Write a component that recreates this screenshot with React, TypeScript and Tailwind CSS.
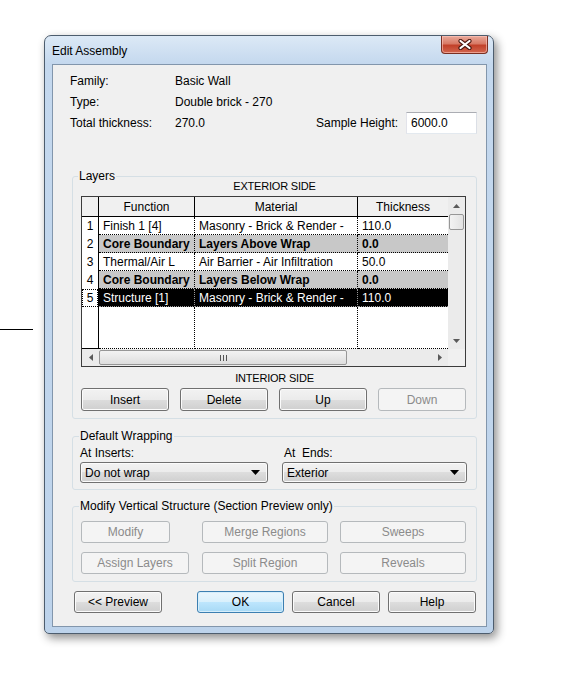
import React from "react";

type Layer = {
  n: number;
  fn: string;
  mat: string;
  th: string;
  kind: "normal" | "core" | "selected";
};

const layers: Layer[] = [
  { n: 1, fn: "Finish 1 [4]", mat: "Masonry - Brick & Render -", th: "110.0", kind: "normal" },
  { n: 2, fn: "Core Boundary", mat: "Layers Above Wrap", th: "0.0", kind: "core" },
  { n: 3, fn: "Thermal/Air L", mat: "Air Barrier - Air Infiltration", th: "50.0", kind: "normal" },
  { n: 4, fn: "Core Boundary", mat: "Layers Below Wrap", th: "0.0", kind: "core" },
  { n: 5, fn: "Structure [1]", mat: "Masonry - Brick & Render -", th: "110.0", kind: "selected" },
];

function WinButton({
  label,
  className,
  disabled,
  primary,
}: {
  label: string;
  className: string;
  disabled?: boolean;
  primary?: boolean;
}) {
  const look = disabled
    ? "border-[#b5b9bc] bg-[#f4f4f4] text-[#8b8b8b]"
    : primary
      ? "border-[#3c7fb1] bg-[linear-gradient(#eaf6fd_0%,#d9f0fc_50%,#bee6fd_50%,#a7d9f5_100%)] text-black shadow-[inset_0_0_0_1px_#d6eefb]"
      : "border-[#707070] bg-[linear-gradient(#f2f2f2_0%,#ebebeb_50%,#dddddd_50%,#cfcfcf_100%)] text-black shadow-[inset_0_0_0_1px_#fbfbfb]";
  return (
    <button
      type="button"
      className={`flex items-center justify-center rounded-[3px] border leading-none ${look} ${className}`}
    >
      {label}
    </button>
  );
}

function Arrow({ dir }: { dir: "up" | "down" | "left" | "right" }) {
  const d =
    dir === "up"
      ? "M0 4 L3.5 0 L7 4 Z"
      : dir === "down"
        ? "M0 0 L7 0 L3.5 4 Z"
        : dir === "left"
          ? "M4 0 L4 7 L0 3.5 Z"
          : "M0 0 L4 3.5 L0 7 Z";
  const w = dir === "up" || dir === "down" ? 7 : 4;
  const h = dir === "up" || dir === "down" ? 4 : 7;
  return (
    <svg width={w} height={h} viewBox={`0 0 ${w} ${h}`}>
      <path d={d} fill="#5a5a5a" />
    </svg>
  );
}

function Select({ value, className }: { value: string; className: string }) {
  return (
    <div
      className={`flex h-[21px] items-center justify-between rounded-[3px] border border-[#707070] bg-[linear-gradient(#f2f2f2_0%,#ebebeb_50%,#dddddd_50%,#cfcfcf_100%)] pl-[4px] pr-[7px] shadow-[inset_0_0_0_1px_#fbfbfb] ${className}`}
    >
      <span>{value}</span>
      <svg width="9" height="5" viewBox="0 0 9 5">
        <path d="M0 0 L9 0 L4.5 5 Z" fill="#000" />
      </svg>
    </div>
  );
}

function LayerRow({ layer }: { layer: Layer }) {
  const rowLook =
    layer.kind === "selected"
      ? "bg-black text-white border-[#9a9a9a]"
      : layer.kind === "core"
        ? "bg-[#c8c8c8] font-bold border-black"
        : "bg-white border-black";
  const cell = `flex items-center overflow-hidden whitespace-nowrap pl-[4px] border-b border-dotted ${rowLook}`;
  return (
    <div className="flex h-[18px]">
      <div className="flex w-[17px] border-r border-black bg-white">
        {layer.kind === "selected" ? (
          <div className="flex flex-1 items-center justify-center border border-dotted border-black">
            {layer.n}
          </div>
        ) : (
          <div className="flex flex-1 items-center justify-center">{layer.n}</div>
        )}
      </div>
      <div className={`w-[96px] border-r ${cell}`}>{layer.fn}</div>
      <div className={`w-[163px] border-r ${cell}`}>{layer.mat}</div>
      <div className={`w-[90px] ${cell}`}>{layer.th}</div>
    </div>
  );
}

function LayersTable() {
  return (
    <div className="ml-[8px] mt-[4px] flex h-[171px] w-[385px] flex-col border border-[#3c3c3c] bg-white">
      <div className="flex h-[152px]">
        <div className="flex w-[366px] flex-col">
          <div className="flex h-[20px] border-b border-black bg-[#f0f0f0]">
            <div className="w-[17px] border-r border-black" />
            <div className="flex w-[96px] items-center justify-center border-r border-black">Function</div>
            <div className="flex w-[163px] items-center justify-center border-r border-black">Material</div>
            <div className="flex w-[90px] items-center justify-center">Thickness</div>
          </div>
          {layers.map((layer) => (
            <LayerRow key={layer.n} layer={layer} />
          ))}
          <div className="flex flex-1">
            <div className="w-[17px] border-r border-b border-black" />
            <div className="w-[96px] border-r border-b border-dotted border-black" />
            <div className="w-[163px] border-r border-b border-dotted border-black" />
            <div className="w-[90px] border-b border-dotted border-black" />
          </div>
        </div>
        <div className="flex w-[17px] flex-col bg-[#ebebeb]">
          <div className="flex h-[17px] items-center justify-center">
            <Arrow dir="up" />
          </div>
          <div className="mx-[1px] h-[16px] rounded-[2px] border border-[#979797] bg-[linear-gradient(90deg,#f3f3f3,#e2e2e2)]" />
          <div className="flex-1" />
          <div className="flex h-[17px] items-center justify-center">
            <Arrow dir="down" />
          </div>
        </div>
      </div>
      <div className="flex h-[17px]">
        <div className="flex w-[366px] items-center bg-[#ebebeb]">
          <div className="flex h-full w-[17px] items-center justify-center">
            <Arrow dir="left" />
          </div>
          <div className="flex h-[15px] w-[248px] items-center justify-center gap-[2px] rounded-[2px] border border-[#979797] bg-[linear-gradient(#f3f3f3,#dedede)]">
            <div className="h-[6px] w-px bg-[#555]" />
            <div className="h-[6px] w-px bg-[#555]" />
            <div className="h-[6px] w-px bg-[#555]" />
          </div>
          <div className="flex-1" />
          <div className="flex h-full w-[17px] items-center justify-center">
            <Arrow dir="right" />
          </div>
        </div>
        <div className="w-[17px] bg-[#f0f0f0]" />
      </div>
    </div>
  );
}

export default function App() {
  return (
    <div className="relative h-[685px] w-[563px] overflow-hidden bg-white pl-[44px] pt-[35px] font-['Liberation_Sans',Arial,sans-serif] text-[12px] text-black">
      <div className="absolute left-0 top-[329px] h-px w-[33px] bg-black" />

      <div className="flex h-[599px] w-[450px] flex-col rounded-t-[7px] rounded-b-[5px] border border-[#4d5d6e] bg-[linear-gradient(#dce9f6_0px,#c4d8ee_28px,#bdd3eb_100%)] pl-[7px] shadow-[3px_4px_10px_rgba(0,0,0,0.45)]">
        <div className="flex h-[28px] items-start justify-between">
          <div className="self-center pt-[1px]">Edit Assembly</div>
          <div className="mr-[5px] flex h-[18px] w-[47px] items-center justify-center rounded-b-[4px] border border-t-0 border-[#7a2f22] bg-[linear-gradient(#e9a99a_0%,#d87a66_45%,#c2412a_55%,#d2664f_100%)] shadow-[inset_0_0_0_1px_rgba(255,200,190,0.6)]">
            <svg width="14" height="11" viewBox="0 0 14 11">
              <path d="M2.5 2 L11.5 9 M11.5 2 L2.5 9" stroke="#4a1810" strokeWidth="4.2" strokeLinecap="round" />
              <path d="M2.5 2 L11.5 9 M11.5 2 L2.5 9" stroke="#ffffff" strokeWidth="2.2" strokeLinecap="round" />
            </svg>
          </div>
        </div>

        <div className="flex h-[563px] w-[435px] flex-col border border-[#8296ac] bg-[#f0f0f0]">
          <div className="flex flex-col pl-[17px] pr-[8px] pt-[5px]">
            <div className="flex h-[21px] items-center">
              <div className="w-[105px]">Family:</div>
              <div>Basic Wall</div>
            </div>
            <div className="flex h-[21px] items-center">
              <div className="w-[105px]">Type:</div>
              <div>Double brick - 270</div>
            </div>
            <div className="flex h-[22px] items-center">
              <div className="w-[105px]">Total thickness:</div>
              <div className="w-[141px]">270.0</div>
              <div className="w-[90px]">Sample Height:</div>
              <div className="flex h-[22px] w-[71px] items-center border border-[#abadb3] border-b-[#e3e9ef] border-r-[#dbdfe6] border-l-[#e2e3ea] bg-white pl-[4px]">
                6000.0
              </div>
            </div>
          </div>

          <fieldset className="ml-[19px] mt-[36px] w-[405px] rounded-[3px] border border-[#d5dfe5] pb-[7px]">
            <legend className="ml-[5px] px-[1px] leading-[12px]">Layers</legend>
            <div className="-mt-[2px] text-center text-[11px] leading-[12px] tracking-[-0.2px]">EXTERIOR SIDE</div>
            <LayersTable />
            <div className="mt-[5px] text-center text-[11px] leading-[12px] tracking-[-0.2px]">INTERIOR SIDE</div>
            <div className="ml-[8px] mt-[4px] flex gap-[11px]">
              <WinButton label="Insert" className="h-[23px] w-[88px]" />
              <WinButton label="Delete" className="h-[23px] w-[88px]" />
              <WinButton label="Up" className="h-[23px] w-[88px]" />
              <WinButton label="Down" className="h-[23px] w-[88px]" disabled />
            </div>
          </fieldset>

          <fieldset className="ml-[19px] mt-[11px] w-[405px] rounded-[3px] border border-[#d5dfe5] pb-[6px]">
            <legend className="ml-[6px] px-[1px] leading-[12px]">Default Wrapping</legend>
            <div className="mt-[4px] flex pl-[7px] leading-[14px]">
              <div className="w-[204px]">At Inserts:</div>
              <div>At&nbsp; Ends:</div>
            </div>
            <div className="mt-[2px] flex gap-[14px] pl-[7px]">
              <Select value="Do not wrap" className="w-[188px]" />
              <Select value="Exterior" className="w-[185px]" />
            </div>
          </fieldset>

          <fieldset className="ml-[19px] mt-[10px] w-[405px] rounded-[3px] border border-[#d5dfe5] pb-[7px]">
            <legend className="ml-[6px] px-[1px] leading-[12px]">Modify Vertical Structure (Section Preview only)</legend>
            <div className="mt-[9px] grid grid-cols-[121px_138px_126px] gap-y-[9px] pl-[8px]">
              <WinButton label="Modify" className="h-[22px] w-[89px]" disabled />
              <WinButton label="Merge Regions" className="h-[22px] w-[126px]" disabled />
              <WinButton label="Sweeps" className="h-[22px] w-[126px]" disabled />
              <WinButton label="Assign Layers" className="h-[22px] w-[108px]" disabled />
              <WinButton label="Split Region" className="h-[22px] w-[126px]" disabled />
              <WinButton label="Reveals" className="h-[22px] w-[126px]" disabled />
            </div>
          </fieldset>

          <div className="ml-[21px] mt-[9px] flex">
            <WinButton label="<< Preview" className="h-[22px] w-[88px]" />
            <WinButton label="OK" className="ml-[35px] h-[22px] w-[87px]" primary />
            <WinButton label="Cancel" className="ml-[8px] h-[22px] w-[88px]" />
            <WinButton label="Help" className="ml-[8px] h-[22px] w-[88px]" />
          </div>
        </div>
      </div>
    </div>
  );
}
